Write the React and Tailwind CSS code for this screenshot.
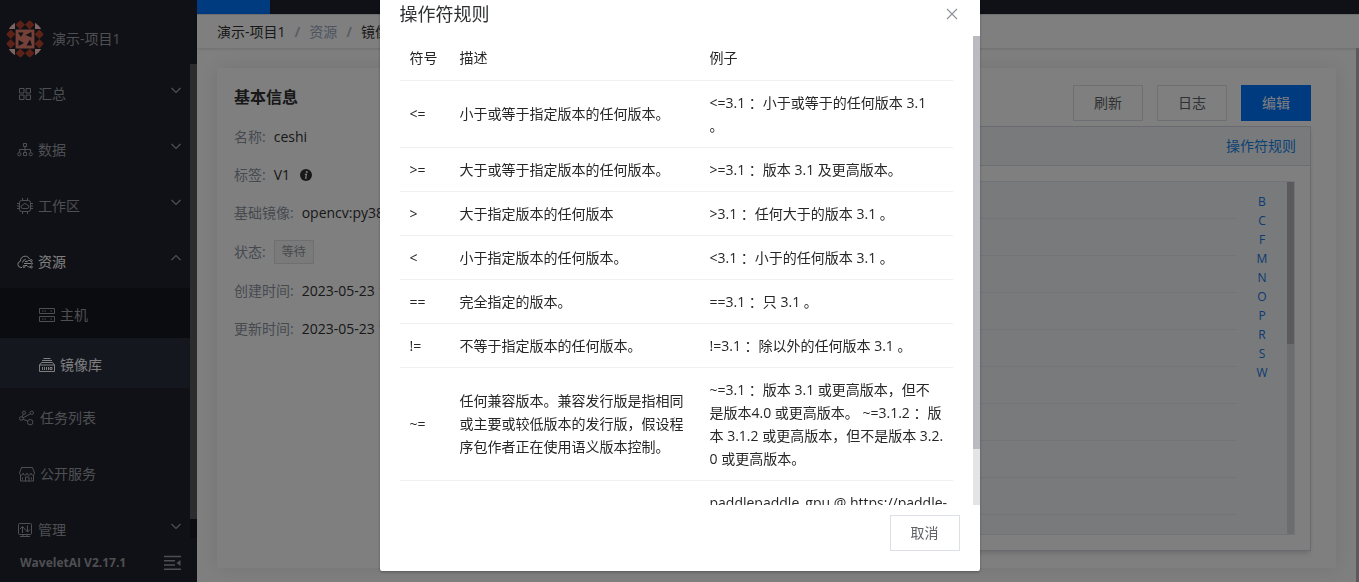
import React, { useState } from 'react';

const operatorRules = [
    { symbol: '<=', desc: '小于或等于指定版本的任何版本。', example: '<=3.1 ：小于或等于的任何版本 3.1\n。' },
    { symbol: '>=', desc: '大于或等于指定版本的任何版本。', example: '>=3.1 ：版本 3.1 及更高版本。' },
    { symbol: '>', desc: '大于指定版本的任何版本', example: '>3.1 ：任何大于的版本 3.1 。' },
    { symbol: '<', desc: '小于指定版本的任何版本。', example: '<3.1 ：小于的任何版本 3.1 。' },
    { symbol: '==', desc: '完全指定的版本。', example: '==3.1 ：只 3.1 。' },
    { symbol: '!=', desc: '不等于指定版本的任何版本。', example: '!=3.1 ：除以外的任何版本 3.1 。' },
    {
        symbol: '~=',
        desc: '任何兼容版本。兼容发行版是指相同或主要或较低版本的发行版，假设程序包作者正在使用语义版本控制。',
        example: '~=3.1 ：版本 3.1 或更高版本，但不\n是版本4.0 或更高版本。 ~=3.1.2 ：版\n本 3.1.2 或更高版本，但不是版本 3.2.\n0 或更高版本。'
    },
    { symbol: '', desc: '', example: 'paddlepaddle_gpu @ https://paddle-' }
];

const letters = ['B', 'C', 'F', 'M', 'N', 'O', 'P', 'R', 'S', 'W'];

const Icon = ({ children }) => (
    <svg viewBox="0 0 16 16" className="h-4 w-4 shrink-0" fill="none" stroke="currentColor" strokeWidth="1">
        {children}
    </svg>
);

const icons = {
    summary: (
        <Icon>
            <path d="M2.5 2.5h4.5v4.5h-4.5zM9 2.5h4.5v4.5h-4.5zM2.5 9h4.5v4.5h-4.5zM9 9h4.5v4.5h-4.5z" />
        </Icon>
    ),
    data: (
        <Icon>
            <path d="M6.5 1.5h3v3h-3zM8 4.5v6M2.5 10.5v-3h11v3M6.5 10.5h3v3h-3z" />
            <circle cx="2.3" cy="12.2" r="1.6" />
            <circle cx="13.7" cy="12.2" r="1.6" />
        </Icon>
    ),
    workspace: (
        <Icon>
            <rect x="2.5" y="2.5" width="11" height="11" rx="2" />
            <path d="M5.5 0v2.5M10.5 0v2.5M5.5 13.5v2.5M10.5 13.5v2.5M0 5.5h2.5M0 10.5h2.5M13.5 5.5h2.5M13.5 10.5h2.5M0 8h2.5M13.5 8h2.5" />
            <path d="M5.7 10.5a1.6 1.6 0 0 1 0-3.2 2.4 2.4 0 0 1 4.6 0 1.6 1.6 0 0 1 0 3.2z" />
        </Icon>
    ),
    resource: (
        <Icon>
            <path d="M5 13.5h-1.2a3.2 3.2 0 0 1-.5-6.3c.2-3 2.2-5 4.9-5 2 0 3.6 1.1 4.3 2.8M5.5 8.5a3.5 3.5 0 0 1 3.2-3" />
            <path d="M8 7.5h2l1.500-1h1.500M7 9.500h7M8 11.500h2l1.500 1.500h2" />
            <circle cx="14.2" cy="6.5" r="1" />
            <circle cx="14.8" cy="9.5" r=".8" />
            <circle cx="14.3" cy="13" r="1" />
            <circle cx="7" cy="12.5" r="1" />
        </Icon>
    ),
    host: (
        <Icon>
            <path d="M.5 1.5h15v5h-15zM.5 9.5h15v5h-15z" />
            <path d="M3 4h1.5M5.5 4h1.5M11.5 4h1.5M3 12h1.5M5.5 12h1.5M11.5 12h1.5" />
        </Icon>
    ),
    images: (
        <Icon>
            <path d="M4.5 1.5h7M3 3.5h10M2.5 5.5h11l2 2.5v6.5h-15v-6.5zM.5 8h15" />
            <path d="M3.5 10v3M5.5 10v3M7.5 10v3M9.5 10v3" />
            <path d="M11 10.5h2v2h-2z" />
        </Icon>
    ),
    tasks: (
        <Icon>
            <circle cx="5" cy="2.7" r="1.6" />
            <circle cx="12.8" cy="2.7" r="1.7" />
            <circle cx="2.3" cy="8.5" r="1.8" />
            <circle cx="11.2" cy="12.2" r="2.7" />
            <path d="M4.4 4.3l-1.3 2.5M11.5 3.8l-7.5 4M4 9.2l4.7 2" />
        </Icon>
    ),
    service: (
        <Icon>
            <path d="M2.5 1.5h11l2 5.5M2.5 1.5l-2 5.5M1.5 9v6h13v-6" />
            <path d="M.5 7c0 2.8 3.7 2.8 3.7 0 0 2.8 3.8 2.8 3.8 0 0 2.8 3.8 2.8 3.8 0 0 2.8 3.7 2.8 3.7 0" />
            <path d="M6.5 15v-4h3.5v4M3.5 11.5v2M12.5 11.5v2" />
        </Icon>
    ),
    manage: (
        <Icon>
            <rect x="1.5" y="1.5" width="13" height="11" rx="1" />
            <path d="M5.5 11v-6.5l-2.5 2.5M5.5 4.5l5 5.5M10.5 3.5v6.5l2.5-2.5M3 14.5h10M6 12.5v2M10 12.5v2" />
        </Icon>
    )
};

const menu = [
    { key: 'summary', label: '汇总', expandable: true },
    { key: 'data', label: '数据', expandable: true },
    { key: 'workspace', label: '工作区', expandable: true },
    {
        key: 'resource',
        label: '资源',
        expandable: true,
        open: true,
        items: [
            { key: 'host', label: '主机' },
            { key: 'images', label: '镜像库', active: true }
        ]
    },
    { key: 'tasks', label: '任务列表' },
    { key: 'service', label: '公开服务' },
    { key: 'manage', label: '管理', expandable: true }
];

const Chevron = ({ open }) => (
    <svg viewBox="0 0 12 12" className="mb-2 h-3 w-3" fill="none" stroke="currentColor" strokeWidth="1.2">
        <path d={open ? 'M1.5 8l4.5-4.5 4.5 4.5' : 'M1.5 4l4.5 4.5 4.5-4.5'} />
    </svg>
);

const Avatar = () => (
    <svg viewBox="0 0 38 38" className="h-[38px] w-[38px]">
        <clipPath id="avatar-clip">
            <circle cx="19" cy="19" r="19" />
        </clipPath>
        <g clipPath="url(#avatar-clip)">
            <path fill="#ffc8c0" d="M0 0h9v9h-9zM29 0h9v9h-9zM0 29h9v9h-9zM29 29h9v9h-9z" />
            <path
                fill="#b8442e"
                d="M14.3 0l4.7 4.7-4.7 4.7-4.7-4.7zM23.7 0l4.7 4.7-4.7 4.7-4.7-4.7zM14.3 28.6l4.7 4.7-4.7 4.7-4.7-4.7zM23.7 28.6l4.7 4.7-4.7 4.7-4.7-4.7zM4.7 9.6l4.7 4.7-4.7 4.7-4.7-4.7zM4.7 19l4.7 4.7-4.7 4.7-4.7-4.7zM33.3 9.6l4.7 4.7-4.7 4.7-4.7-4.7zM33.3 19l4.7 4.7-4.7 4.7-4.7-4.7z"
            />
            <path fill="#e88271" d="M9.6 9.6h18.8v18.8h-18.8z" />
            <path
                fill="#20222c"
                d="M12 12.500h5.500l-2.500 4.500zM25.500 12v5.500l-6-2.500zM26 25.500h-5.500l3.500-6zM12.500 26v-6l5.500 3z"
            />
        </g>
    </svg>
);

const Sidebar = () => (
    <aside className="flex w-[197px] shrink-0 flex-col bg-[#20222c] text-[#9c9fa5]">
        <div className="flex h-16 shrink-0 items-center gap-2 pt-3.5 pl-1.5">
            <Avatar />
            <span>演示-项目1</span>
        </div>
        <div className="flex min-h-0 flex-1">
            <nav className="flex-1 overflow-hidden">
                {menu.map(entry => (
                    <div key={entry.key}>
                        <a
                            href="#"
                            className={`flex h-14 items-center gap-[5px] pt-1 pr-2 ${entry.expandable ? 'pl-[17px]' : 'pl-[19px]'} ${
                                entry.open ? 'text-white' : ''
                            }`}
                        >
                            {icons[entry.key]}
                            <span className="flex-1">{entry.label}</span>
                            {entry.expandable && (
                                <span className="text-[#9c9fa5]">
                                    <Chevron open={entry.open} />
                                </span>
                            )}
                        </a>
                        {entry.items && (
                            <div className="bg-[#16181e]">
                                {entry.items.map(item => (
                                    <a
                                        key={item.key}
                                        href="#"
                                        className={`flex h-[50px] items-center gap-[5px] pt-1 pl-[39px] ${
                                            item.active ? 'bg-[#2a2e3f] text-white' : ''
                                        }`}
                                    >
                                        {icons[item.key]}
                                        <span>{item.label}</span>
                                    </a>
                                ))}
                            </div>
                        )}
                    </div>
                ))}
            </nav>
            <div className="w-[7px] bg-[#1a1b22]">
                <div className="h-[96%] bg-[#58595f]" />
            </div>
        </div>
        <div className="flex h-11 shrink-0 items-center justify-between pt-1.5 pr-4 pl-5 text-xs font-bold">
            <span>WaveletAI V2.17.1</span>
            <svg viewBox="0 0 17 16" className="h-4 w-[17px]" fill="none" stroke="currentColor" strokeWidth="1.5">
                <path d="M0 1.5h17M0 5.8h11M0 10h11M0 14.3h17" />
                <path d="M16.500 5v6l-4-3z" fill="currentColor" stroke="none" />
            </svg>
        </div>
    </aside>
);

const InfoRow = ({ label, children }) => (
    <div className="flex min-h-[22px] items-center gap-2 whitespace-nowrap">
        <dt className="text-[#8d949f]">{label}:</dt>
        <dd className="flex items-center gap-2.5 text-[#303133]">{children}</dd>
    </div>
);

const BasicInfo = () => (
    <section className="w-[300px] pl-[17px]">
        <h2 className="mt-[17px] text-base leading-6 font-bold text-[#303133]">基本信息</h2>
        <dl className="mt-[17px] flex flex-col gap-4">
            <InfoRow label="名称">ceshi</InfoRow>
            <InfoRow label="标签">
                V1
                <svg viewBox="0 0 12 12" className="h-3 w-3">
                    <circle cx="6" cy="6" r="6" fill="#303133" />
                    <circle cx="6.8" cy="3" r="1" fill="#fff" />
                    <path d="M4.8 5.3h1.7l-.9 3.9h1" fill="none" stroke="#fff" strokeWidth="1.2" />
                </svg>
            </InfoRow>
            <InfoRow label="基础镜像">opencv:py38</InfoRow>
            <InfoRow label="状态">
                <span className="border border-[#dddfe3] bg-[#f4f4f5] px-[7px] text-xs leading-[22px] text-[#909399]">等待</span>
            </InfoRow>
            <InfoRow label="创建时间">2023-05-23 1</InfoRow>
            <InfoRow label="更新时间">2023-05-23 1</InfoRow>
        </dl>
    </section>
);

const PackagePanel = ({ onShowRules }) => (
    <section className="flex flex-1 flex-col gap-[5px] py-[17px] pr-[25px]">
        <div className="flex justify-end gap-3.5">
            <button type="button" className="h-9 w-[70px] border border-[#dcdfe6] text-[#606266]">刷新</button>
            <button type="button" className="h-9 w-[70px] border border-[#dcdfe6] text-[#606266]">日志</button>
            <button type="button" className="h-9 w-[70px] bg-[#0074ff] text-white">编辑</button>
        </div>
        <div className="flex min-h-0 flex-1 flex-col border border-[#d3d7e0] shadow-md">
            <div className="flex h-[39px] shrink-0 items-center justify-end border-b border-[#d8dce5] bg-[#f2f5f8] pr-3.5">
                <button type="button" onClick={onShowRules} className="text-[#1684e8]">操作符规则</button>
            </div>
            <div className="flex min-h-0 flex-1 p-[15px]">
                <div className="flex flex-1 overflow-hidden border border-[#e4e7ed] bg-[#f2f5f8]">
                    <div className="flex-1">
                        {[1, 2, 3, 4, 5, 6, 7, 8, 9].map(n => (
                            <div key={n} className="h-[37px] border-b border-[#e6e9ee]" />
                        ))}
                    </div>
                    <div className="flex w-[50px] flex-col items-center pt-2.5 text-xs leading-[19px] text-[#1676e0]">
                        {letters.map(letter => (
                            <a key={letter} href="#">{letter}</a>
                        ))}
                    </div>
                    <div className="w-[7px] bg-[#d8dade]">
                        <div className="h-[46%] bg-[#b4b5ba]" />
                    </div>
                </div>
            </div>
        </div>
    </section>
);

const RulesDialog = ({ onClose }) => (
    <div className="fixed inset-0 flex justify-center bg-black/50 pb-[11px]">
        <div role="dialog" aria-label="操作符规则" className="flex w-[600px] flex-col rounded-b-xs bg-white shadow-[0_1px_3px_rgba(0,0,0,0.3)]">
            <div className="flex shrink-0 items-center justify-between px-5 pt-0.5 pb-2.5">
                <h1 className="text-lg leading-6 text-[#303133]">操作符规则</h1>
                <button type="button" aria-label="关闭" onClick={onClose} className="p-0.5 text-[#909399]">
                    <svg viewBox="0 0 12 12" className="h-3 w-3" fill="none" stroke="currentColor" strokeWidth="1.2">
                        <path d="M1 1l10 10M11 1l-10 10" />
                    </svg>
                </button>
            </div>
            <div className="flex min-h-0 flex-1">
                <div className="flex-1 overflow-hidden px-5">
                    <table className="w-full table-fixed text-left leading-[23px] break-all text-[#262626]">
                        <thead>
                            <tr className="h-11 border-b border-[#f0f0f0]">
                                <th className="w-[50px] px-2.5 font-normal">符号</th>
                                <th className="w-[250px] px-2.5 font-normal">描述</th>
                                <th className="px-2.5 font-normal">例子</th>
                            </tr>
                        </thead>
                        <tbody>
                            {operatorRules.map((rule, idx) => (
                                <tr key={idx} className="border-b border-[#f0f0f0]">
                                    <td className="px-2.5 py-2.5">{rule.symbol}</td>
                                    <td className="px-2.5 py-2.5">{rule.desc}</td>
                                    <td className="py-2.5 pr-1 pl-2.5 whitespace-pre-line">{rule.example}</td>
                                </tr>
                            ))}
                        </tbody>
                    </table>
                </div>
                <div className="w-[7px] bg-[#e4e4e4]">
                    <div className="h-[88%] bg-[#babbc0]" />
                </div>
            </div>
            <div className="flex shrink-0 justify-end px-5 pt-2.5 pb-5">
                <button type="button" onClick={onClose} className="h-9 w-[70px] border border-[#dcdfe6] text-[#606266]">取消</button>
            </div>
        </div>
    </div>
);

const App = () => {
    const [showRules, setShowRules] = useState(true);

    return (
        <div className="flex h-screen overflow-hidden bg-white font-['Open_Sans','Noto_Sans_CJK_SC',sans-serif] text-sm">
            <Sidebar />
            <div className="flex min-w-0 flex-1 flex-col">
                <div className="h-3.5 shrink-0 bg-[#20222c]">
                    <div className="h-full w-[73px] bg-[#0074ff]" />
                </div>
                <div className="flex h-[34px] shrink-0 items-center border-t border-[#d8dce5] px-5 shadow-[0_1px_3px_rgba(0,0,0,0.15)]">
                    <a href="#" className="text-[#303133]">演示-项目1</a>
                    <span className="px-[9px] font-bold text-[#b4bccc]">/</span>
                    <span className="text-[#97a8be]">资源</span>
                    <span className="px-[9px] font-bold text-[#b4bccc]">/</span>
                    <a href="#" className="text-[#303133]">镜像库</a>
                </div>
                <div className="flex min-h-0 flex-1">
                    <main className="flex flex-1 px-5 pt-5 pb-3.5">
                        <div className="flex flex-1 shadow-[0_0_20px_rgba(0,0,0,0.1)]">
                            <BasicInfo />
                            <PackagePanel onShowRules={() => setShowRules(true)} />
                        </div>
                    </main>
                    <div className="w-[3px] bg-[#b4b5ba]" />
                </div>
            </div>
            {showRules && <RulesDialog onClose={() => setShowRules(false)} />}
        </div>
    );
};

export default App;
